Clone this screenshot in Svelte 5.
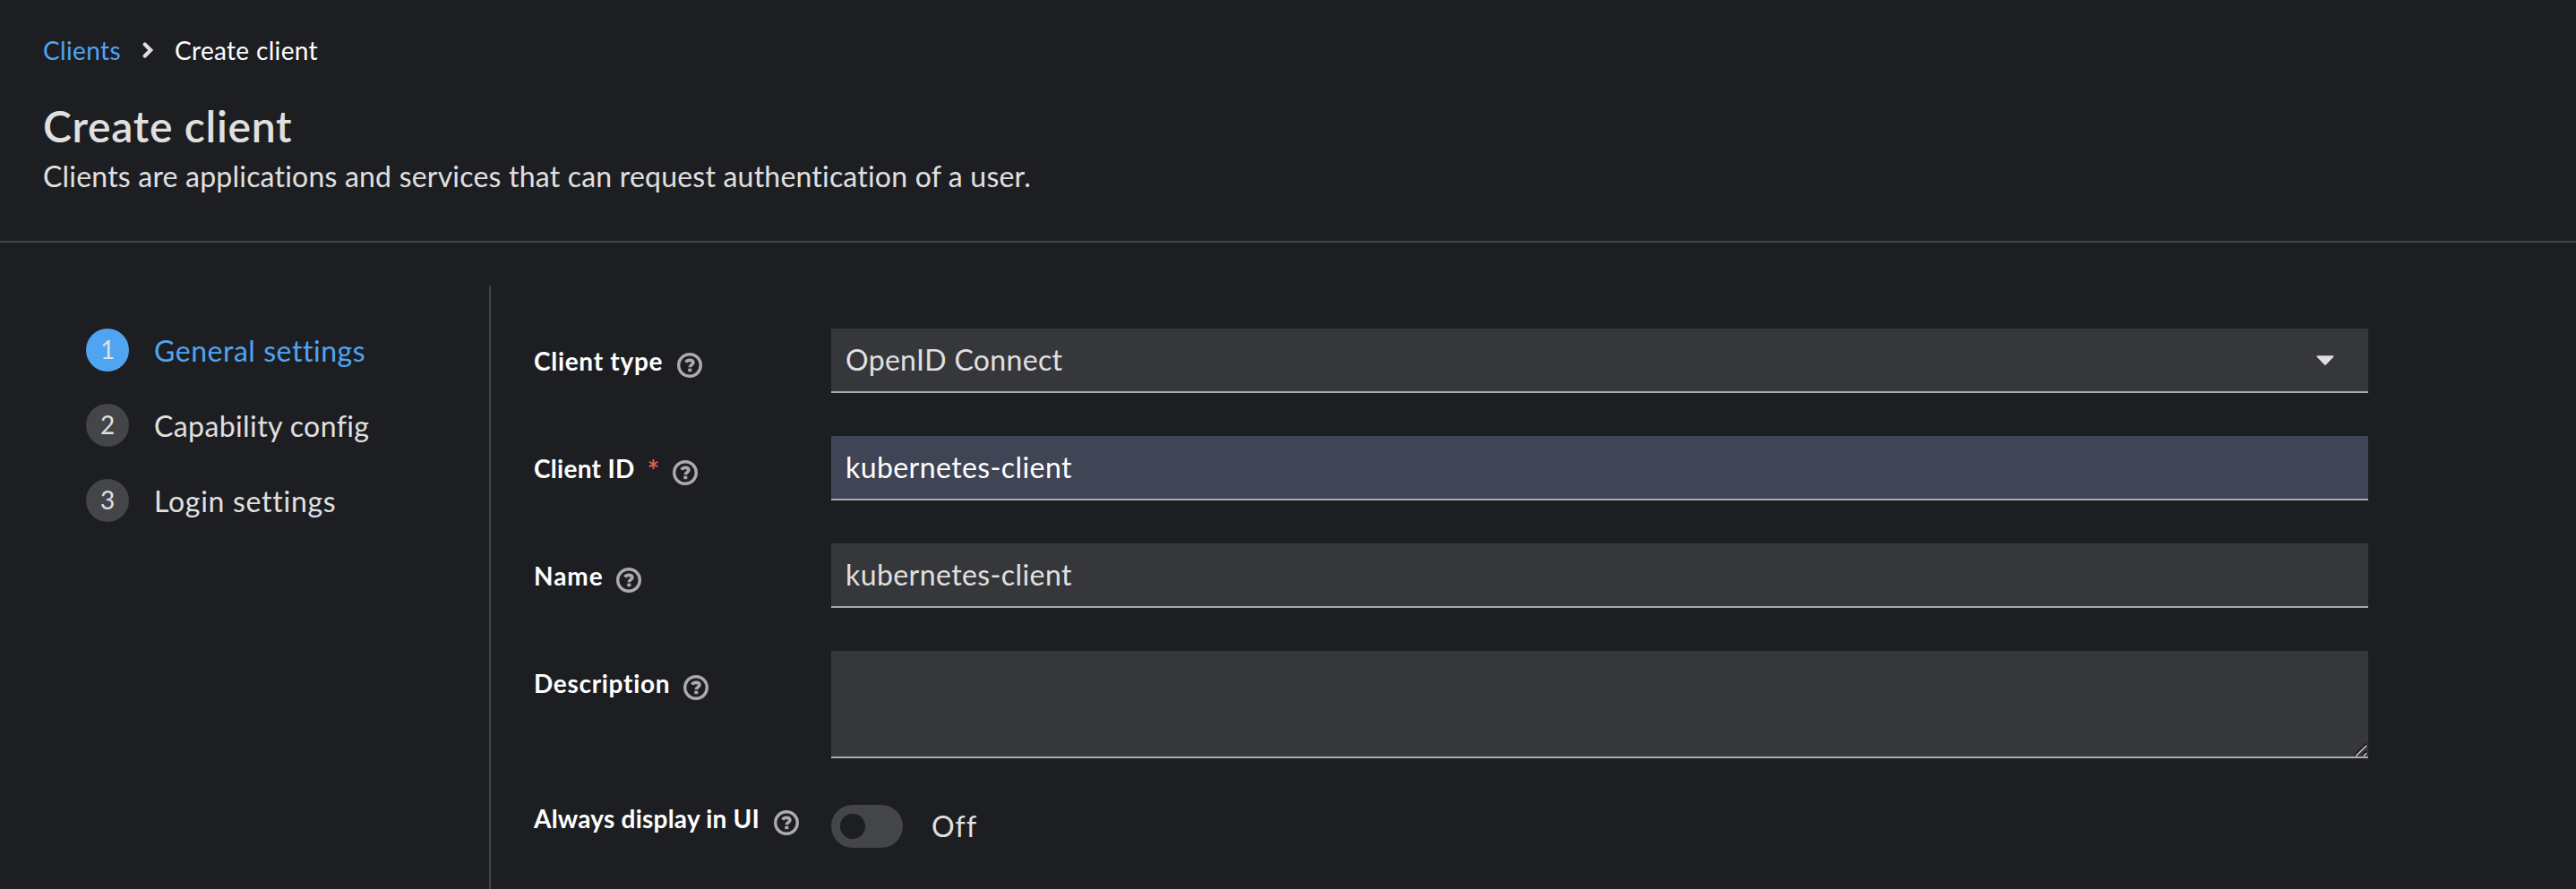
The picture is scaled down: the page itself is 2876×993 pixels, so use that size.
<script>
  const steps = [
    { label: 'General settings', key: 'general', active: true },
    { label: 'Capability config', key: 'capability', active: false },
    { label: 'Login settings', key: 'login', active: false }
  ];
</script>

{#snippet help()}
  <svg class="help" width="28" height="28" viewBox="0 0 28 28" aria-hidden="true">
    <circle cx="14" cy="14" r="12.3" fill="none" stroke="currentColor" stroke-width="3.4" />
    <path d="M9.7 10.6C10.7 9 12.1 8.4 14.1 8.4C16.4 8.4 17.9 9.5 17.9 11.2C17.9 13.7 14.3 13.5 14.3 16.3" fill="none" stroke="currentColor" stroke-width="3.6" />
    <rect x="12.3" y="17.7" width="4" height="3.5" fill="currentColor" />
  </svg>
{/snippet}

<div class="page">
  <header class="header">
    <nav class="breadcrumb">
      <a class="crumb-link" href="#clients">Clients</a>
      <svg class="chevron" width="14" height="20" viewBox="0 0 14 20" aria-hidden="true">
        <path d="M3.7 3.5L10.2 10L3.7 16.5" fill="none" stroke="currentColor" stroke-width="4.2" stroke-linecap="round" />
      </svg>
      <span class="crumb-current">Create client</span>
    </nav>
    <h1>Create client</h1>
    <p>Clients are applications and services that can request authentication of a user.</p>
  </header>

  <main class="wizard">
    <nav class="steps">
      {#each steps as step, i}
        <div class="step {step.key}" class:active={step.active}>
          <span class="number">{i + 1}</span>
          <span class="step-label">{step.label}</span>
        </div>
      {/each}
    </nav>

    <section class="form">
      <div class="row">
        <div class="label"><span class="type-label">Client type</span>{@render help()}</div>
        <div class="control select">
          <span class="openid">OpenID Connect</span>
          <svg class="caret" width="20" height="12" viewBox="0 0 20 12" aria-hidden="true">
            <path d="M1.4 0.2H18.6Q20.2 0.6 19 2L10.8 10.6Q10 11.5 9.2 10.6L1 2Q-0.2 0.6 1.4 0.2Z" fill="currentColor" />
          </svg>
        </div>
      </div>

      <div class="row">
        <div class="label"><span class="id-label">Client ID</span><span class="required">*</span>{@render help()}</div>
        <div class="control filled"><span class="value">kubernetes-client</span></div>
      </div>

      <div class="row">
        <div class="label"><span class="name-label">Name</span>{@render help()}</div>
        <div class="control"><span class="value">kubernetes-client</span></div>
      </div>

      <div class="row">
        <div class="label"><span class="desc-label">Description</span>{@render help()}</div>
        <div class="control area">
          <svg class="grip" width="16" height="16" viewBox="0 0 16 16" aria-hidden="true">
            <path d="M0.5 15L14 1.5M9 15L14 10" stroke="#17181a" stroke-width="1.8" />
            <path d="M2.2 15.5L14 3.7M10.7 15.5L14 12.2" stroke="#c4c4c5" stroke-width="1.6" />
          </svg>
        </div>
      </div>

      <div class="row toggle-row">
        <div class="label"><span class="always-label">Always display in UI</span>{@render help()}</div>
        <div class="toggle">
          <span class="track"><span class="knob"></span></span>
          <span class="state">Off</span>
        </div>
      </div>
    </section>
  </main>
</div>

<style>
  :global(body) {
    background: #1d1e21;
  }

  .page {
    display: flex;
    flex-direction: column;
    width: 100%;
    height: 993px;
    overflow: hidden;
    background: #1d1e21;
    color: #e0e0e0;
    font-family: Lato, "Liberation Sans", sans-serif;
    font-size: 32px;
    line-height: 48px;
  }

  .header {
    box-sizing: border-box;
    flex: none;
    height: 271px;
    padding: 35px 48px 0;
    border-bottom: 2px solid #444548;
  }

  .breadcrumb {
    display: flex;
    align-items: center;
    font-size: 28px;
    line-height: 42px;
  }

  .crumb-link {
    width: 110px;
    color: #4fa5f2;
    text-decoration: none;
    letter-spacing: 0.36px;
  }

  .chevron {
    width: 14px;
  }

  .crumb-current {
    margin-left: 23px;
    color: #fff;
    letter-spacing: 0.326px;
  }

  h1 {
    margin: 33px 0 0;
    font-size: 48px;
    font-weight: 600;
    line-height: 62px;
    letter-spacing: 0.72px;
  }

  p {
    margin: 1px 0 0;
    letter-spacing: 0.205px;
  }

  .wizard {
    display: flex;
    flex: 1;
    padding-top: 48px;
  }

  .steps {
    box-sizing: border-box;
    display: flex;
    flex: none;
    flex-direction: column;
    gap: 36px;
    width: 548px;
    padding: 48px 0 0 96px;
    border-right: 2px solid #444548;
  }

  .step {
    display: flex;
    gap: 28px;
    height: 48px;
  }

  .number {
    width: 48px;
    height: 48px;
    border-radius: 50%;
    background: #444548;
    font-size: 28px;
    line-height: 46px;
    text-align: center;
  }

  .step-label {
    line-height: 50px;
  }

  .active .number {
    background: #4fa5f2;
  }

  .active .step-label {
    color: #4fa5f2;
  }

  .general .step-label {
    letter-spacing: 0.54px;
  }

  .capability .step-label {
    letter-spacing: 0.4px;
  }

  .login .step-label {
    letter-spacing: 0.72px;
  }

  .form {
    display: flex;
    flex: 1;
    flex-direction: column;
    gap: 48px;
    padding: 48px 0 0 48px;
  }

  .row {
    display: grid;
    grid-template-columns: 332px 1716px;
  }

  .label {
    display: flex;
    align-items: flex-start;
    padding-top: 15px;
    color: #fff;
    font-size: 28px;
    font-weight: 700;
    line-height: 42px;
    white-space: nowrap;
  }

  .type-label {
    width: 145px;
    letter-spacing: 0.705px;
  }

  .id-label {
    letter-spacing: 0.292px;
  }

  .name-label {
    width: 77px;
    letter-spacing: 0.95px;
  }

  .desc-label {
    width: 152px;
    letter-spacing: 0.7px;
  }

  .always-label {
    width: 253px;
    letter-spacing: 0.22px;
  }

  .required {
    width: 13px;
    margin-left: 14px;
    color: #f0604d;
    font-size: 32px;
    font-weight: 600;
    line-height: 48px;
  }

  .help {
    flex: none;
    margin: 12px 0 0 15px;
    color: #aaabac;
  }

  .control {
    display: flex;
    box-sizing: border-box;
    height: 72px;
    padding: 0 16px;
    border-bottom: 2px solid #aaabac;
    background: #36373a;
    line-height: 70px;
  }

  .select {
    align-items: center;
    justify-content: space-between;
    padding-right: 38px;
  }

  .caret {
    margin-top: 2px;
  }

  .openid {
    letter-spacing: 0.33px;
  }

  .filled {
    background: #3f4555;
    color: #fff;
  }

  .value {
    letter-spacing: 0.42px;
  }

  .area {
    align-items: flex-end;
    justify-content: flex-end;
    height: 120px;
    padding: 0;
  }

  .toggle-row .label {
    margin-top: -2px;
    padding-top: 0;
  }

  .toggle {
    display: flex;
    align-items: center;
    height: 48px;
    margin-top: 4px;
  }

  .track {
    box-sizing: border-box;
    width: 80px;
    height: 48px;
    padding: 10px;
    border-radius: 24px;
    background: #444548;
  }

  .knob {
    display: block;
    width: 28px;
    height: 28px;
    border-radius: 50%;
    background: #1d1e21;
  }

  .state {
    margin-left: 32px;
    line-height: 46px;
    letter-spacing: 1.1px;
  }
</style>
